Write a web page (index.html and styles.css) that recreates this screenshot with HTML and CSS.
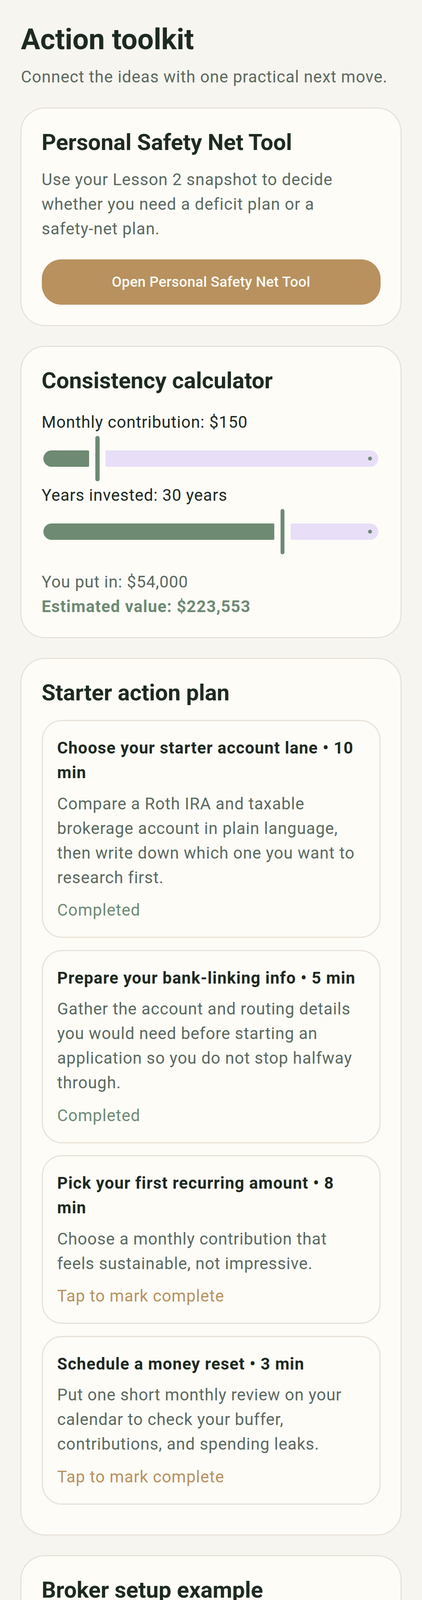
FILE: index.html
```html
<!DOCTYPE html>
<html lang="en">
<head>
<meta charset="utf-8">
<title>Action toolkit</title>
<link rel="stylesheet" href="styles.css">
</head>
<body>
<main class="toolkit">
  <header class="toolkit-header">
    <h1 class="toolkit-title">Action toolkit</h1>
    <p class="toolkit-sub">Connect the ideas with one practical next move.</p>
  </header>

  <section class="card">
    <h2 class="card-title">Personal Safety Net Tool</h2>
    <p class="card-text">Use your Lesson 2 snapshot to decide whether you need a deficit plan or a safety-&#8288;net plan.</p>
    <button class="primary-btn" type="button">Open Personal Safety Net Tool</button>
  </section>

  <section class="card card-calc">
    <h2 class="card-title">Consistency calculator</h2>
    <div class="calc-field">
      <p class="calc-label">Monthly contribution: $150</p>
      <div class="slider" role="slider" aria-valuenow="150" aria-label="Monthly contribution">
        <span class="slider-active" style="width: 13.7%"></span>
        <span class="slider-thumb"></span>
        <span class="slider-inactive"><span class="slider-stop"></span></span>
      </div>
    </div>
    <div class="calc-field">
      <p class="calc-label">Years invested: 30 years</p>
      <div class="slider" role="slider" aria-valuenow="30" aria-label="Years invested">
        <span class="slider-active" style="width: 69%"></span>
        <span class="slider-thumb"></span>
        <span class="slider-inactive"><span class="slider-stop"></span></span>
      </div>
    </div>
    <div class="calc-results">
      <p class="calc-put">You put in: $54,000</p>
      <p class="calc-estimate">Estimated value: $223,553</p>
    </div>
  </section>

  <section class="card card-list">
    <h2 class="card-title">Starter action plan</h2>
    <ul class="plan-list">
      <li class="plan-item">
        <p class="plan-title">Choose your starter account lane • 10 min</p>
        <p class="plan-desc">Compare a Roth IRA and taxable brokerage account in plain language, then write down which one you want to research first.</p>
        <p class="plan-status plan-status-done">Completed</p>
      </li>
      <li class="plan-item">
        <p class="plan-title">Prepare your bank-linking info • 5 min</p>
        <p class="plan-desc">Gather the account and routing details you would need before starting an application so you do not stop halfway through.</p>
        <p class="plan-status plan-status-done">Completed</p>
      </li>
      <li class="plan-item">
        <p class="plan-title">Pick your first recurring amount • 8 min</p>
        <p class="plan-desc">Choose a monthly contribution that feels sustainable, not impressive.</p>
        <p class="plan-status plan-status-todo">Tap to mark complete</p>
      </li>
      <li class="plan-item">
        <p class="plan-title">Schedule a money reset • 3 min</p>
        <p class="plan-desc">Put one short monthly review on your calendar to check your buffer, contributions, and spending leaks.</p>
        <p class="plan-status plan-status-todo">Tap to mark complete</p>
      </li>
    </ul>
  </section>

  <section class="card card-list">
    <h2 class="card-title">Broker setup example</h2>
    <ol class="steps">
      <li class="step">
        <p class="step-label">Step 1</p>
        <p class="step-title">Choose the account type</p>
        <p class="step-desc">Explain common beginner starting points such as a Roth IRA or taxable brokerage account as educational examples.</p>
      </li>
      <li class="step">
        <p class="step-label">Step 2</p>
        <p class="step-title">Create your broker profile</p>
        <p class="step-desc">Use the broker app or website, complete the&nbsp;requested identification steps, and pause if any screen feels confusing.</p>
      </li>
      <li class="step">
        <p class="step-label">Step 3</p>
        <p class="step-title">Link your checking account</p>
        <p class="step-desc">Connect the account that already receives your income so future transfers can happen without extra friction.</p>
      </li>
      <li class="step">
        <p class="step-label">Step 4</p>
        <p class="step-title">Learn what a broad index fund is</p>
        <p class="step-desc">Teach simplicity here. The goal is to understand a diversified long-&#8288;term fund, not&nbsp;to turn beginners into daily traders.</p>
      </li>
      <li class="step">
        <p class="step-label">Step 5</p>
        <p class="step-title">Turn on recurring contributions</p>
        <p class="step-desc">Choose a boringly sustainable amount and frequency. Consistency matters more than ambition in month one.</p>
      </li>
      <li class="step">
        <p class="step-label">Step 6</p>
        <p class="step-title">Check less, continue more</p>
        <p class="step-desc">Reinforce that this is a long game. The default posture is to keep contributing, not to constantly tweak.</p>
      </li>
    </ol>
  </section>
</main>
</body>
</html>
```

FILE: styles.css
```css
* {
  box-sizing: border-box;
}

html,
body {
  margin: 0;
  padding: 0;
}

body {
  background: #f7f5f0;
  color: #1d2a21;
  font-family: Roboto, "Noto Sans", "Liberation Sans", sans-serif;
  font-size: 42px;
  line-height: 63px;
  letter-spacing: 1px;
}

p,
h1,
h2,
ul,
ol {
  margin: 0;
  padding: 0;
}

ul,
ol {
  list-style: none;
}

.toolkit {
  display: flex;
  flex-direction: column;
  gap: 50px;
  padding: 54px 52px 18px;
}

.toolkit-header {
  display: flex;
  flex-direction: column;
  gap: 16.5px;
  margin-bottom: -3px;
  padding-left: 1.5px;
}

.toolkit-title {
  font-size: 73.5px;
  line-height: 94.5px;
  font-weight: 700;
  letter-spacing: 0;
  color: #1d2a21;
}

.toolkit-sub {
  color: #5b6a5f;
}

/* Cards */
.card {
  background: #fdfcf7;
  border: 3px solid #e8e2d8;
  border-radius: 63px;
  padding: 52px 51.5px;
  display: flex;
  flex-direction: column;
}

.card-title {
  font-size: 57.75px;
  line-height: 69.3px;
  font-weight: 700;
  letter-spacing: 0;
  color: #1d2a21;
}

.card-text {
  margin-top: 28.5px;
  color: #5b6a5f;
}

.primary-btn {
  margin-top: 47.5px;
  display: block;
  width: 100%;
  height: 115.5px;
  border: none;
  border-radius: 50px;
  background: #b8915e;
  color: #fffdf8;
  font-family: inherit;
  font-size: 36.75px;
  font-weight: 500;
  letter-spacing: 0.26px;
  line-height: 52.5px;
  cursor: pointer;
}

/* Calculator */
.card-calc {
  padding-bottom: 47.5px;
}

.card-calc .card-title {
  margin-bottom: 40px;
}

.calc-label {
  color: #1d2a21;
}

.slider {
  display: flex;
  align-items: center;
  gap: 15.75px;
  height: 115.5px;
  margin: 4.2px 5.8px 4.2px 4.5px;
}

.slider-active {
  flex: none;
  height: 42px;
  background: #6e8a73;
  border-radius: 21px 3px 3px 21px;
}

.slider-thumb {
  flex: none;
  width: 10.5px;
  height: 115.5px;
  border-radius: 5.25px;
  background: #6e8a73;
}

.slider-inactive {
  flex: 1;
  height: 42px;
  background: #e8def8;
  border-radius: 3px 21px 21px 3px;
  display: flex;
  align-items: center;
  justify-content: flex-end;
  padding-right: 15.5px;
}

.slider-stop {
  width: 10.5px;
  height: 10.5px;
  border-radius: 50%;
  background: #6e8a73;
}

.calc-results {
  margin-top: 35px;
}

.calc-put {
  color: #5b6a5f;
}

.calc-estimate {
  color: #6e8a73;
  font-weight: 700;
  letter-spacing: 1.31px;
}

/* Lists */
.card-list {
  padding-bottom: 52px;
}

.plan-list {
  margin-top: 34.5px;
  margin-bottom: 24px;
  display: flex;
  flex-direction: column;
  gap: 30.5px;
}

.plan-item {
  border: 3px solid #e8e2d8;
  border-radius: 52px;
  padding: 37px 36.75px;
  background: #fdfcf7;
}

.plan-title {
  font-weight: 700;
  letter-spacing: 1.31px;
  color: #1d2a21;
}

.plan-desc {
  margin-top: 16.5px;
  color: #5b6a5f;
}

.plan-status {
  margin-top: 20.5px;
}

.plan-status-done {
  color: #6e8a73;
}

.plan-status-todo {
  color: #b8915e;
}

.steps {
  margin-top: 33.5px;
  margin-bottom: 21px;
  display: flex;
  flex-direction: column;
  gap: 26px;
}

.step-label {
  color: #b8915e;
  font-weight: 600;
  letter-spacing: 1.31px;
}

.step-title {
  font-weight: 700;
  letter-spacing: 1.31px;
  color: #1d2a21;
}

.step-desc {
  color: #5b6a5f;
}
```
